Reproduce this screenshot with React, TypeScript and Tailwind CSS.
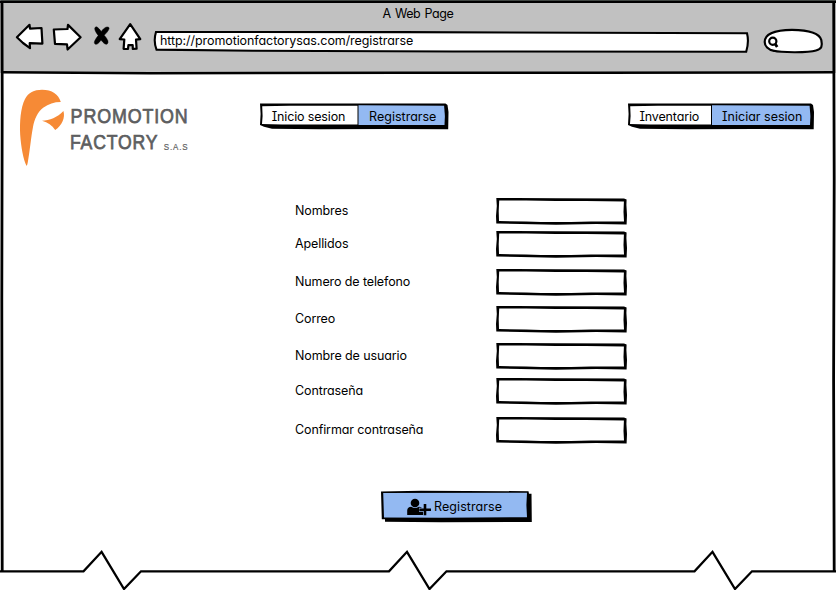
import React from "react";

const ink = "#000";

function Logo() {
  return (
    <svg width="176" height="80" viewBox="18 88 176 80" className="block shrink-0 overflow-visible">
      <path
        d="M26.5 165.8C23.5 160 21 147 20.2 135C19.6 122 20.5 108 25 99C28.5 92.5 34 89.8 42 89.7C52 89.8 58.5 94 60.8 102C54 102 48.5 104 43.5 107.5C37.5 112 34.5 119 33 127C31 137 30 150 28 161Q27.3 165.5 26.5 165.8Z"
        fill="#f68a36"
      />
      <path d="M42 120.8C49.5 120.3 57.5 117.5 63.4 111C65.5 117.5 62 125.5 55.2 130C52 125.5 48 122.5 42 120.8Z" fill="#f68a36" />
      <g fill="#5d5e60" stroke="#5d5e60" strokeWidth="0.75" fontFamily="'Liberation Sans', Arial, sans-serif">
        <text x="70.6" y="122.8" fontSize="21" letterSpacing="1" textLength="118" lengthAdjust="spacingAndGlyphs">PROMOTION</text>
        <text x="70" y="149.3" fontSize="21" letterSpacing="1" textLength="88.3" lengthAdjust="spacingAndGlyphs">FACTORY</text>
        <text x="163.8" y="149.5" fontSize="9.5" strokeWidth="0.2" letterSpacing="1" textLength="24.6" lengthAdjust="spacingAndGlyphs">S.A.S</text>
      </g>
    </svg>
  );
}

function Field({ label, className }: { label: string; className: string }) {
  return (
    <label className={`flex h-[26px] items-center ${className}`}>
      <span className="w-[201px] whitespace-nowrap tracking-[-0.11px]">{label}</span>
      <span className="relative block h-[28px] w-[131px]">
        <svg width="131" height="28" className="absolute inset-0" fill={ink}>
          <path fill="#fff" d="M2 3H129V26H2Z" />
          <path
            d="M.3 1L20 .9L60 1.3L128 1.6L130.6 2.4L130.4 8L131 18L130.6 27.6L100 27.1L60 27.8L25 27L.3 26.4L0 19L.8 9ZM3.2 3.5L2.7 14L3 24L30 24.4L45 25L75 25L95 24.4L128 24.6L127.5 15L127.9 4.6L90 4L60 4L30 3.5Z"
            fillRule="evenodd"
          />
        </svg>
      </span>
    </label>
  );
}

function ButtonBar({ left, right, split, width }: { left: string; right: string; split: number; width: number }) {
  return (
    <div className="relative flex h-[27px] pb-[1px]" style={{ width }}>
      <svg width={width} height="27" className="absolute inset-0 overflow-visible">
        <path d={`M0 -.4L60 -.6L${width - 3} -.5L${width - 1} .9L${width} 8L${width - 0.3} 25.2L${width - 60} 25.1L60 25.3L12 24.8L4 22.8L0 21L.6 10Z`} fill={ink} />
        <path d={`M2.2 2.2L30 1.7L${split} 1.7V20.6H22L2 20L2.6 12Z`} fill="#fff" />
        <path d={`M${split + 1} 1.2L${width - 4.4} 1.7L${width - 3.6} 12L${width - 4} 21H${split + 1}Z`} fill="#93b9f2" />
      </svg>
      <span className="relative flex items-center justify-center tracking-[-0.15px]" style={{ width: split - 0.5 }}>{left}</span>
      <span className="relative flex flex-1 items-center justify-center">{right}</span>
    </div>
  );
}

export default function App() {
  return (
    <div
      className="relative flex h-[590px] w-[836px] flex-col overflow-hidden bg-white text-[12.5px] leading-[16px] text-black"
      style={{ fontFamily: "Inter, 'Noto Sans', sans-serif", fontFeatureSettings: "'cv11' 1, 'cv08' 1" }}
    >
      <header className="flex h-[73px] flex-col bg-[#c1c1c1]">
        <div className="flex h-[23px] items-center justify-center pt-[4px] tracking-[-0.4px] [word-spacing:1px]">A Web Page</div>
        <div className="flex pl-[15px]">
          <svg width="128" height="30" viewBox="15 22 128 30" fill="#fff" stroke={ink} strokeWidth="2.2" strokeLinejoin="round" className="-mt-[1px] shrink-0">
            <path d="M16.9 37.2L29.5 24.8L30 28.7L41.5 28L42.4 43.6L29.7 43.2L30 48.2L23 43Z" />
            <path d="M53.8 29.5L67.5 29L68 24.9L80.6 37.3L67.6 49.5L67 44.3L55 43.8Z" />
            <path d="M95.3 27.2Q97 25.6 101.2 31.5Q105.5 25.7 108.7 27.3Q110.5 29 104.2 35.3Q109.8 41.5 107.2 44Q105 45.3 101 40Q97 45.8 94.8 43.8Q93 42 98.2 35.5Q93.3 29 95.3 27.2Z" fill={ink} stroke={ink} strokeWidth="0.5" />
            <path d="M130.2 24.2L140.3 39.2L136 39.6L136.6 48.7L132.8 48.9L132.7 45.2L128.4 45.2L128 49L123.6 48.8L124.3 39.5L119.7 39.1Z" />
          </svg>
          <div className="relative ml-[10px] mt-[8px] flex h-[22px] w-[596px] items-center pb-[2px] pl-[7px] tracking-[-0.08px]">
            <svg width="596" height="22" className="absolute inset-0" fill="#fff" stroke={ink} strokeWidth="2.1">
              <path d="M3 1L250 1.1L594 2.3Q596.2 11 593.2 20.8L300 20.5L100 19.7L3.5 18.6Q.2 10 3 1Z" />
            </svg>
            <span className="relative">http://promotionfactorysas.com/registrarse</span>
          </div>
          <svg width="62" height="26" viewBox="762 28 62 26" fill="#fff" stroke={ink} strokeWidth="2.2" className="ml-[13px] mt-[5px] shrink-0">
            <path d="M764.7 42C764.7 35 771 30 792 29.8C810 30 819.5 33 821.3 40C822.5 46 822 49 816 50.5C808 53 780 52.5 774 50.8C768 50 764.7 46 764.7 42Z" />
            <circle cx="772.8" cy="41.3" r="3.6" />
            <path d="M774.9 43.4L777.2 47" strokeWidth="2.8" />
          </svg>
        </div>
      </header>

      <main className="flex flex-1 flex-col pt-[15px]">
        <nav className="flex h-[80px] pl-[18px]">
          <Logo />
          <div className="ml-[66px] mt-[16px]">
            <ButtonBar left="Inicio sesion" right="Registrarse" split={97.5} width={188.5} />
          </div>
          <div className="ml-[179.5px] mt-[16px]">
            <ButtonBar left="Inventario" right="Iniciar sesion" split={83} width={186} />
          </div>
        </nav>

        <form className="flex flex-col pl-[295px] pt-[30px]">
          <Field label="Nombres" className="mb-[7px]" />
          <Field label="Apellidos" className="mb-[12px]" />
          <Field label="Numero de telefono" className="mb-[11px]" />
          <Field label="Correo" className="mb-[11px]" />
          <Field label="Nombre de usuario" className="mb-[9px]" />
          <Field label="Contraseña" className="mb-[13px]" />
          <Field label="Confirmar contraseña" className="mb-[47px]" />
          <button type="button" className="relative ml-[86px] flex h-[33px] w-[151px] items-center pl-[26px]">
            <svg width="151" height="33" className="absolute inset-0">
              <path d="M0 1.5L40 .8L147.5 1.2L148 3.7H150.5L150.8 31.9L60 32.2L4 31.8V29.3H.8Z" fill={ink} />
              <path d="M2.2 3.1L146 2.8L145.4 15L146 27.2L60 27.8L3 27.4Z" fill="#93b9f2" />
            </svg>
            <svg width="24" height="18" viewBox="0 0 24 18" className="relative mt-[1px] shrink-0">
              <circle cx="8" cy="5" r="4.3" fill={ink} />
              <path d="M.2 17V12.6Q.2 9 4.2 8.7Q8 11.3 11.8 8.7Q16 9 16 12.6V17Z" fill={ink} />
              <path d="M18 5.5V18M12 11.7H24" stroke="#93b9f2" strokeWidth="4" />
              <path d="M18 6V17.3M12.3 11.7H24" stroke={ink} strokeWidth="2.6" />
            </svg>
            <span className="relative ml-[3px] tracking-[0.08px]">Registrarse</span>
          </button>
        </form>
      </main>

      <svg width="836" height="590" className="pointer-events-none absolute inset-0" fill="none" stroke={ink}>
        <path d="M0 1.8H836" strokeWidth="2.6" />
        <path d="M1 .5H836" stroke="#404542" strokeWidth="1" />
        <path d="M2 2L2.2 100L1.8 300L2.2 571" strokeWidth="2.8" />
        <path d="M833.7 2L834.2 180L833.6 380L834.2 571" strokeWidth="2.8" />
        <path d="M2 72.2L150 73.2L400 72.8L600 72.8L834 72.2" strokeWidth="2.5" />
        <path d="M0 571.3H83.5L101.6 551.8L124 589L141 571.3H389L407 551.8L429.5 589L446.5 571.3H694.5L712.5 551.8L735 589L752 571.3H836" strokeWidth="2.3" />
      </svg>
    </div>
  );
}
